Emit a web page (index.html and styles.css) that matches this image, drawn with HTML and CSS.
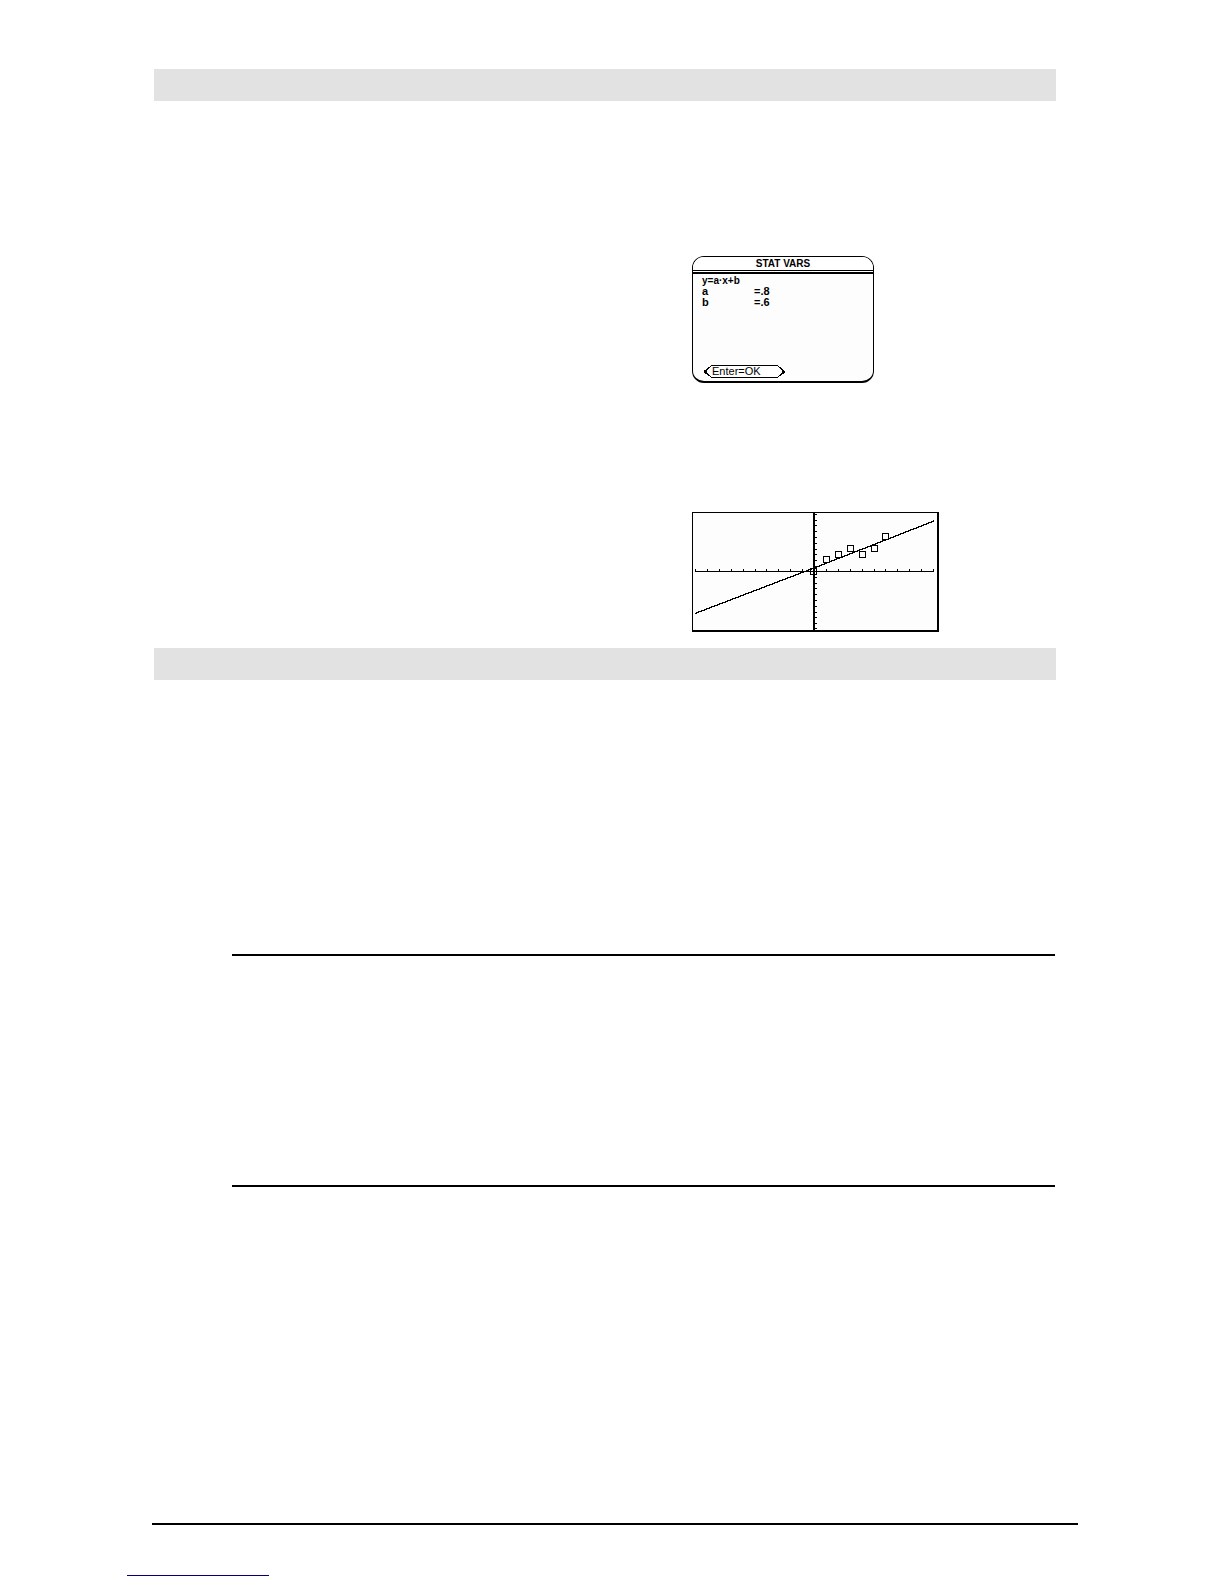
FILE: index.html
```html
<!DOCTYPE html>
<html lang="en">
<head>
<meta charset="utf-8">
<title>Stat Vars</title>
<link rel="stylesheet" href="styles.css">
</head>
<body>
<main class="content">
  <div class="band"></div>
  <section class="figures">
    <div class="screen">
      <h1 class="screen-title">STAT VARS</h1>
      <div class="screen-body">
        <p class="equation">y=a·x+b</p>
        <dl class="vars">
          <dt>a</dt><dd>=.8</dd>
          <dt>b</dt><dd>=.6</dd>
        </dl>
        <button class="ok" type="button">
          <svg class="ok-outline" width="81" height="13" viewBox="0 0 81 13" shape-rendering="crispEdges" aria-hidden="true">
            <path d="M8 .5H73L76 2.5L79 5.5V7.5L76 10.5L73 12.5H8L5 10.5L2 7.5V5.5L5 2.5Z" fill="#fff" stroke="#000"/>
            <path d="M0 5h3v4H1V8H0zM78 5h2v1h1v2h-1v1h-2z"/>
          </svg>
          <span class="ok-label">Enter=OK</span>
        </button>
      </div>
    </div>
    <svg class="graph" width="247" height="120" viewBox="0 0 247 120" shape-rendering="crispEdges" role="img" aria-label="Scatter plot with regression line">
      <path d="M0 0H247V120H0Z"/>
      <path d="M1 1H245V118H1Z" fill="#fdfdfd"/>
      <path d="M3 59H242V60H3ZM121 1H123V118H121Z"/>
      <path d="M3.5 57v2M15.5 57v2M27.5 57v2M39.5 57v2M51.5 57v2M63.5 57v2M74.5 57v2M86.5 57v2M98.5 57v2M110.5 57v2M134.5 57v2M146.5 57v2M158.5 57v2M170.5 57v2M182.5 57v2M193.5 57v2M205.5 57v2M217.5 57v2M229.5 57v2M241.5 57v2" stroke="#000"/>
      <path d="M123 2.5h2M123 8.5h2M123 13.5h2M123 19.5h2M123 25.5h2M123 31.5h2M123 37.5h2M123 42.5h2M123 48.5h2M123 54.5h2M123 65.5h2M123 71.5h2M123 76.5h2M123 82.5h2M123 88.5h2M123 94.5h2M123 100.5h2M123 105.5h2M123 111.5h2M123 116.5h2" stroke="#000"/>
      <path d="M3 101.5L122 56L242 9" fill="none" stroke="#000" stroke-width="1.3"/>
      <g fill="none" stroke="#000">
        <path d="M118.500 56.500h6v6h-6z"/>
        <path d="M131.500 44.500h6v6h-6z"/>
        <path d="M143.500 39.500h6v6h-6z"/>
        <path d="M155.500 33.500h6v6h-6z"/>
        <path d="M167.500 39.500h6v6h-6z"/>
        <path d="M179.500 33.500h6v6h-6z"/>
        <path d="M190.500 21.500h6v6h-6z"/>
      </g>
    </svg>
  </section>
  <div class="band"></div>
  <hr class="rule rule-top">
  <hr class="rule rule-bottom">
</main>
<footer class="footer">
  <hr class="footer-rule">
  <div class="link-line"></div>
</footer>
</body>
</html>
```
FILE: styles.css
```css
* { box-sizing: border-box; }

body {
  margin: 0;
  background: #fff;
  color: #000;
  font-family: "Liberation Sans", Arial, sans-serif;
}

.content { padding: 69px 168px 0 154px; }

.band {
  height: 32px;
  background: #e2e2e2;
}

.figures {
  display: flex;
  flex-direction: column;
  align-items: flex-start;
  gap: 129px;
  padding: 155px 0 16px 538px;
}

.screen {
  width: 182px;
  border: 1px solid #000;
  border-bottom-width: 2px;
  border-radius: 12px;
  background: #fdfdfd;
  overflow: hidden;
  font-size: 11px;
  font-weight: bold;
  line-height: 11px;
}

.screen-title {
  margin: 0 0 1px;
  padding-top: 1px;
  border-bottom: 1px solid #000;
  background: #fff;
  font-size: 10px;
  line-height: 12px;
  text-align: center;
}

.screen-body {
  padding: 1px 9px 3px;
  border-top: 2px solid #000;
}

.equation,
.vars { margin: 0; }

.equation { font-size: 10px; }

.vars {
  display: grid;
  grid-template-columns: 52px auto;
  justify-content: start;
  padding-bottom: 57px;
}

.vars dd { margin: 0; }

.ok {
  display: block;
  position: relative;
  width: 81px;
  margin-left: 2px;
  padding: 0 0 0 8px;
  border: 0;
  background: none;
  color: inherit;
  font: inherit;
  font-weight: normal;
  line-height: 13px;
  text-align: left;
}

.ok-outline {
  position: absolute;
  inset: 0;
}

.ok-label { position: relative; }

.graph { display: block; }

.rule,
.footer-rule {
  height: 2px;
  margin: 0;
  border: 0;
  background: #000;
}

.rule { margin: 0 1px 0 78px; }
.rule-top { margin-top: 274px; }
.rule-bottom { margin-top: 229px; }

.footer { padding: 336px 146px 8px 127px; }
.footer-rule { margin-left: 25px; }

.link-line {
  width: 142px;
  height: 1px;
  margin-top: 50px;
  background: #00007c;
}
```
